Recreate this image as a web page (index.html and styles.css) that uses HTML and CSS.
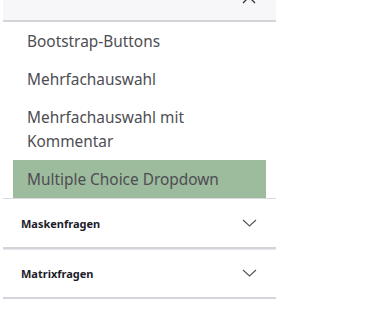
FILE: index.html
```html
<!DOCTYPE html>
<html lang="de">
<head>
  <meta charset="UTF-8">
  <meta name="viewport" content="width=device-width, initial-scale=1.0">
  <title>Fragetypen</title>
  <link rel="stylesheet" href="styles.css">
</head>
<body>
  <div class="panel">
    <div class="group open">
      <div class="group-head">
        <svg class="chevron up" width="14" height="8" viewBox="0 0 14 8"><path d="M1 7 L7 1 L13 7" fill="none" stroke="#333" stroke-width="1.3"/></svg>
      </div>
      <ul class="items">
        <li>Bootstrap-Buttons</li>
        <li>Mehrfachauswahl</li>
        <li>Mehrfachauswahl mit Kommentar</li>
        <li class="active">Multiple Choice Dropdown</li>
      </ul>
    </div>

    <div class="group">
      <div class="group-title">
        <span>Maskenfragen</span>
        <svg class="chevron" width="15" height="8" viewBox="0 0 15 8"><path d="M1 1 L7.5 7 L14 1" fill="none" stroke="#555" stroke-width="1.1"/></svg>
      </div>
    </div>

    <div class="group">
      <div class="group-title">
        <span>Matrixfragen</span>
        <svg class="chevron" width="15" height="8" viewBox="0 0 15 8"><path d="M1 1 L7.5 7 L14 1" fill="none" stroke="#555" stroke-width="1.1"/></svg>
      </div>
    </div>
  </div>
</body>
</html>
```

FILE: styles.css
```css
body {
  margin: 0;
  background-color: #fff;
  font-family: "Noto Sans", "Open Sans", sans-serif;
}
.panel {
  margin-left: 3px;
  width: 273px;
}
.group {
  border-bottom: 2px solid #d4d4db;
  box-shadow: 0 1px 0 #e6e6ea;
}
.group.open {
  border-bottom: 1px solid #d9d9df;
  box-shadow: none;
}
.group-head {
  height: 20px;
  background-color: #f7f7f9;
  border-bottom: 2px solid #d3d3da;
  display: flex;
  justify-content: flex-end;
  padding-right: 20px;
  overflow: hidden;
}
.chevron.up {
  margin-top: -4px;
}
.items {
  list-style: none;
  margin: 0;
  padding: 0;
}
.items li {
  margin: 0 10px;
  padding: 8px 30px 6px 14px;
  font-size: 15.4px;
  line-height: 24px;
  color: #4d4d52;
}
.items li.active {
  background-color: #9dbb9d;
}
.group-title {
  height: 48px;
  display: flex;
  align-items: center;
  justify-content: space-between;
  padding: 0 19px 0 18px;
  font-size: 11px;
  font-weight: bold;
  color: #1c1c2a;
}
```
